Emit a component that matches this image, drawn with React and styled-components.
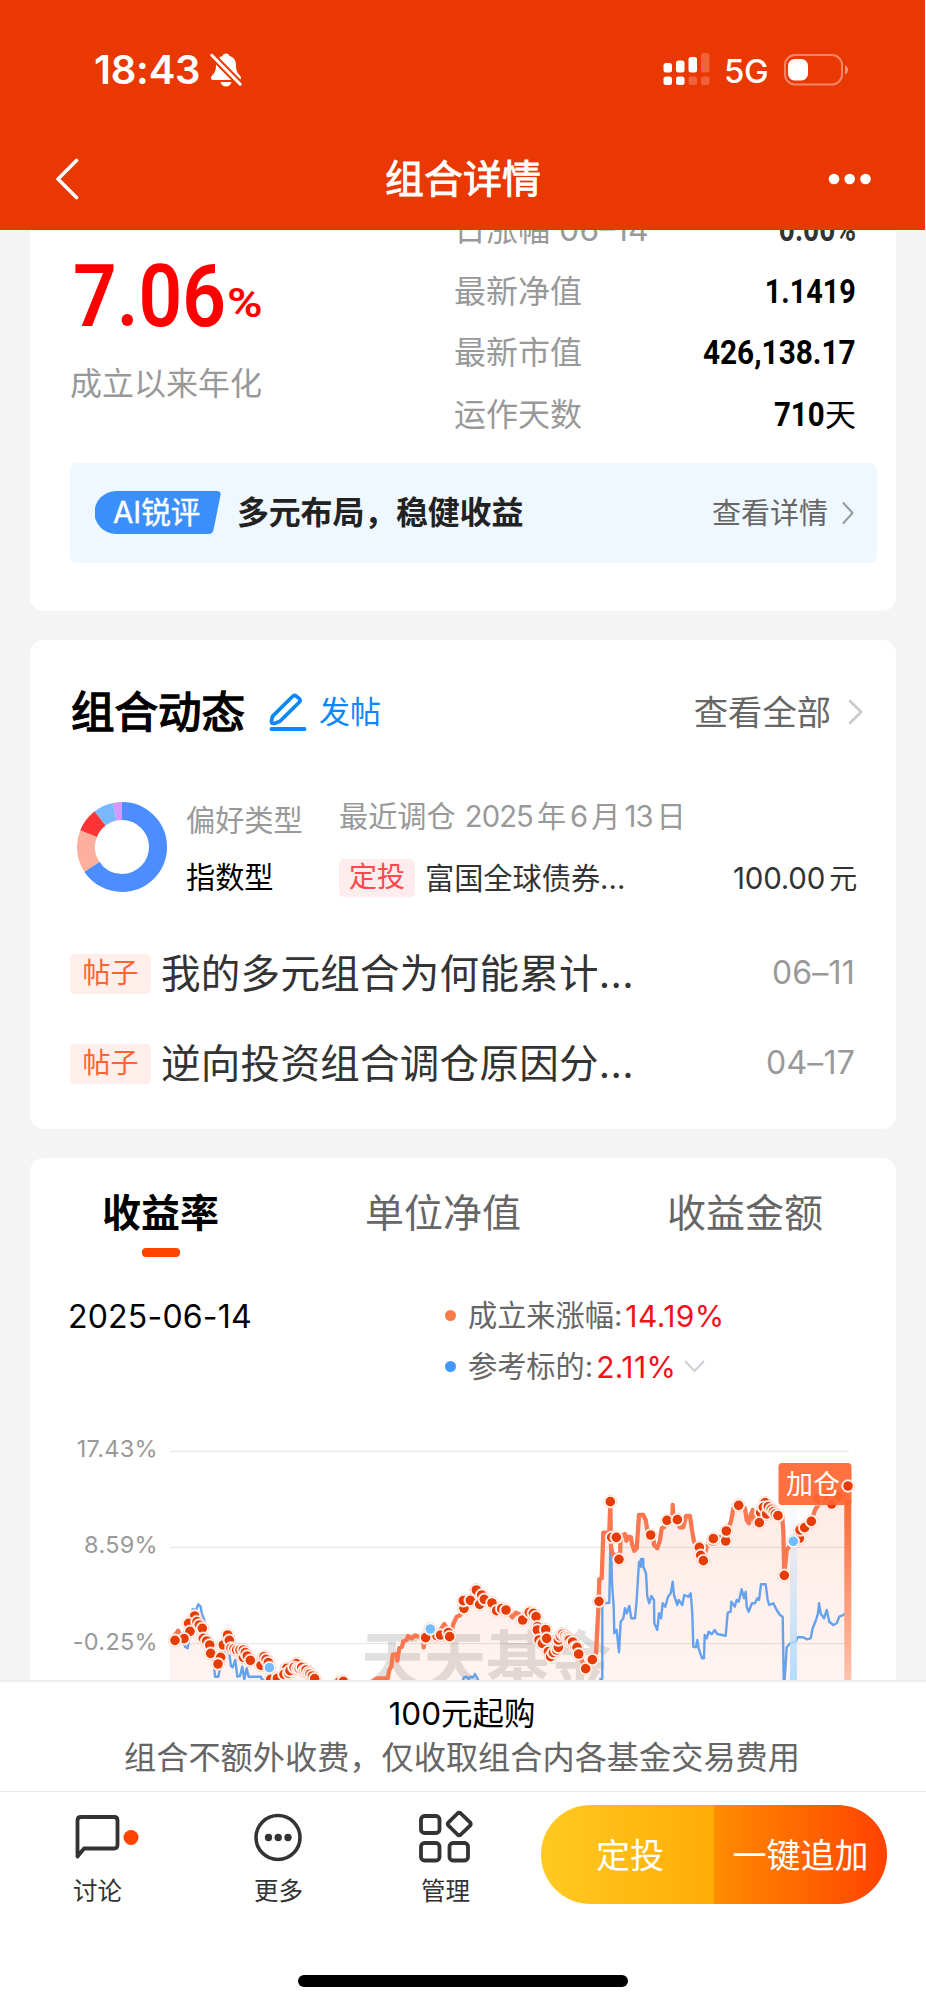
import React from "react";
import styled, { createGlobalStyle } from "styled-components";

const GlobalStyle = createGlobalStyle`
  * {
    box-sizing: border-box;
  }

  body {
    margin: 0;
    background: #f4f4f4;
    font-family: Inter, "Noto Sans CJK SC", sans-serif;
    color: #000;
  }

  svg {
    display: block;
    flex-shrink: 0;
  }
`;

/* ========== Page ========== */
const Page = styled.div`
  width: 926px;
  height: 2006px;
  display: flex;
  flex-direction: column;
  overflow: hidden;
  white-space: nowrap;
`;

const Header = styled.header`
  width: 925px;
  height: 230px;
  flex-shrink: 0;
  background: #ea3802;
  color: #fff;
`;

const StatusBar = styled.div`
  height: 139px;
  padding: 0 76px 0 94px;
  display: flex;
  align-items: center;
  justify-content: space-between;
`;

const StatusGroup = styled.div`
  display: flex;
  align-items: center;
`;

const Clock = styled.span`
  font-size: 40px;
  font-weight: 600;
  line-height: 44px;
  width: 116px;
  letter-spacing: -0.2px;
`;

const Network = styled.span`
  font-size: 33px;
  font-weight: 500;
  line-height: 40px;
  width: 60px;
  margin: 2px 0 0 14px;
  letter-spacing: -0.5px;
`;

const NavBar = styled.div`
  height: 79px;
  padding: 0 54px 0 55px;
  display: flex;
  align-items: center;
  justify-content: space-between;
`;

const NavTitle = styled.h1`
  margin: 0;
  padding-left: 17px;
  font-size: 39px;
  font-weight: 400;
  line-height: 48px;
  -webkit-text-stroke: 0.9px #fff;
`;

const Content = styled.main`
  height: 1450px;
  flex-shrink: 0;
  overflow: hidden;
  padding: 0 30px;
`;

const Card = styled.section`
  width: 866px;
  height: ${(p) => p.$height}px;
  margin-bottom: 29px;
  border-radius: 14px;
  background: #fff;
  overflow: hidden;
`;

/* ========== Summary ========== */
const SummaryCard = styled(Card)`
  margin-top: -31px;
`;

const Summary = styled.div`
  display: flex;
  justify-content: space-between;
  height: 263.5px;
  padding: 0 40px 0 40px;
`;

const Annual = styled.div`
  padding-top: 57px;
`;

const Rate = styled.div`
  display: flex;
  height: 97px;
  color: #ff0000;
  font-family: Roboto, sans-serif;
  font-weight: 700;
  font-size: 88px;
  line-height: 80px;
`;

const Squeeze = styled.span`
  display: inline-block;
  transform: scaleX(${(p) => p.$x});
  transform-origin: ${(p) => p.$from || "right"} center;
`;

const RateNumber = styled(Squeeze)`
  width: 154px;
  margin-left: 3px;
  font-weight: 600;
`;

const Percent = styled.span`
  display: inline-block;
  font-size: 41px;
  font-weight: 600;
  line-height: 94px;
  transform: scaleX(1.18);
  transform-origin: left center;
`;

const Muted = styled.div`
  font-size: 32px;
  line-height: 62px;
  color: #999;
`;

const StatList = styled.div`
  width: 402px;
`;

const StatRow = styled.div`
  display: flex;
  justify-content: space-between;
  height: 61.5px;
  font-size: 32px;
  line-height: 61.5px;
  color: #999;
`;

const StatValue = styled.span`
  display: flex;
  justify-content: flex-end;
  font-family: Roboto, "Noto Sans CJK SC", sans-serif;
  font-weight: 700;
  font-size: 33.5px;
  color: ${(p) => (p.$soft ? "#333" : "#000")};
`;

const Unit = styled.span`
  font-family: Inter, "Noto Sans CJK SC", sans-serif;
  font-weight: 400;
  font-size: 31px;
`;

const ReviewBar = styled.div`
  display: flex;
  align-items: center;
  width: 807px;
  height: 100px;
  margin-left: 40px;
  padding: 0 23px 0 25px;
  border-radius: 7px;
  background: #f0f8ff;
`;

const ReviewBadge = styled.span`
  display: grid;
  width: 126px;
  height: 43px;
  margin-right: 16px;
  color: #fff;
  font-size: 29.5px;
  line-height: 43px;
  -webkit-text-stroke: 0.4px #fff;
  text-indent: 18px;

  & > * {
    grid-area: 1 / 1;
  }
`;

const ReviewText = styled.span`
  flex: 1;
  font-size: 32px;
  line-height: 40px;
  font-weight: 700;
  letter-spacing: -0.2px;
  padding-top: 1px;
  color: #222;
`;

const MoreText = styled.span`
  font-size: ${(p) => p.$size}px;
  line-height: 44px;
  padding-top: 2px;
  margin-right: ${(p) => p.$gap}px;
  color: #666;
`;

/* ========== Activity ========== */
const ActivityHead = styled.div`
  display: flex;
  align-items: center;
  height: 144px;
  padding: 0 33px 0 41px;
`;

const ActivityTitle = styled.h2`
  margin: 0 20px 0 0;
  width: 178px;
  font-size: 43.5px;
  font-weight: 400;
  line-height: 60px;
  padding-bottom: 1px;
  -webkit-text-stroke: 1.5px #000;
`;

const PostLink = styled.span`
  flex: 1;
  margin-left: 12px;
  font-size: 31px;
  line-height: 40px;
  color: #0a88fb;
`;

const Preference = styled.div`
  display: flex;
  height: 146px;
  padding: 5px 40px 0 47px;
`;

const PreferenceType = styled.div`
  width: 153px;
  margin-left: 19px;
  padding-top: 4px;
  font-size: 29.2px;
  line-height: 56.5px;
`;

const Gray = styled.div`
  color: #999;
`;

const LastChange = styled.div`
  flex: 1;
  font-size: 29.2px;
`;

const ChangeDate = styled.div`
  line-height: 56px;
  color: #999;

  & > span {
    margin: 0 4px 0 4px;
    letter-spacing: -0.9px;
  }

  & > span:first-child {
    margin-left: 9px;
  }
`;

const ChangeRow = styled.div`
  display: flex;
  align-items: center;
  height: 38px;
  margin-top: 14px;
  line-height: 38px;
  color: #333;
`;

const Tag = styled.span`
  flex-shrink: 0;
  width: ${(p) => p.$width}px;
  height: ${(p) => p.$height}px;
  margin-right: 10px;
  border-radius: 5px;
  background: ${(p) => p.$bg};
  color: ${(p) => p.$color};
  font-size: 28px;
  line-height: ${(p) => p.$height - 1}px;
  text-align: center;
`;

const FundName = styled.span`
  flex: 1;
  padding-top: 1px;
`;

const Amount = styled.span`
  font-size: 29.5px;
  letter-spacing: -0.2px;
  margin-right: -1px;

  & > span {
    margin-left: 4px;
    font-size: 28px;
  }
`;

const PostRow = styled.div`
  display: flex;
  align-items: center;
  height: 90px;
  padding: 0 41px 2px 40px;
`;

const PostTitle = styled.span`
  flex: 1;
  font-size: 39.5px;
  line-height: 50px;
  letter-spacing: 0.3px;
  padding-bottom: 1px;
  color: #333;
`;

const PostDate = styled.span`
  font-size: 32px;
  line-height: 40px;
  padding-bottom: 2px;
  letter-spacing: 0.2px;
  color: #999;
`;

/* ========== Performance ========== */
const Tabs = styled.div`
  display: flex;
  justify-content: space-between;
  height: 118px;
  padding: 24px 73px 0 72px;
`;

const Tab = styled.div`
  height: 75px;
  display: flex;
  flex-direction: column;
  align-items: center;
  justify-content: space-between;
  font-size: 39px;
  line-height: 62px;
  font-weight: ${(p) => (p.$active ? 700 : 400)};
  color: ${(p) => (p.$active ? "#000" : "#666")};

  &::after {
    content: "";
    width: 38px;
    height: 9px;
    border-radius: 4px;
    background: ${(p) => (p.$active ? "#ff4400" : "transparent")};
  }
`;

const Legend = styled.div`
  display: flex;
  height: 124px;
  padding: 14px 41px 0 38px;
`;

const LegendDate = styled.div`
  width: 377px;
  font-size: 32px;
  line-height: 54px;
  letter-spacing: 0.2px;
`;

const LegendRow = styled.div`
  display: flex;
  align-items: center;
  height: 51px;
  font-size: 29.2px;
  line-height: 48px;
  color: #666;

  &::before {
    content: "";
    width: 11px;
    height: 11px;
    margin-right: 12px;
    border-radius: 50%;
    background: ${(p) => p.$dot};
  }
`;

const LegendValue = styled.span`
  margin: 0 8px 0 3px;
  font-size: 30px;
  letter-spacing: 0.4px;
  color: #f5101a;
`;

/* ========== Bottom ========== */
const Notice = styled.div`
  height: 112px;
  flex-shrink: 0;
  padding: 10px 2px 0 0;
  background: #fff;
  border-top: 2px solid #ededed;
  border-bottom: 1px solid #e8e8e8;
  text-align: center;
  font-size: 32.2px;
  line-height: 46px;
  color: #666;

  & > div:first-child {
    color: #000;
    font-size: 31.5px;
    line-height: 43px;
  }
`;

const BottomBar = styled.footer`
  flex: 1;
  display: flex;
  flex-direction: column;
  align-items: center;
  justify-content: space-between;
  padding: 13px 39px 19px 61px;
  background: #fff;
`;

const Actions = styled.div`
  width: 100%;
  display: flex;
`;

const Action = styled.div`
  width: ${(p) => p.$width}px;
  padding-left: ${(p) => p.$indent || 0}px;
  font-size: 24.5px;
  line-height: 36px;
  color: #333;

  & > svg {
    margin-bottom: 8px;
  }
`;

const ActionLabel = styled.div`
  margin-left: ${(p) => p.$shift || 0}px;
`;

const BuyButtons = styled.div`
  display: flex;
  width: 346px;
  height: 99px;
  border-radius: 50px;
  overflow: hidden;
`;

const BuyButton = styled.button`
  width: 173px;
  padding: 0 0 3px ${(p) => p.$indent || 0}px;
  border: 0;
  color: #fff;
  font: 34px Inter, "Noto Sans CJK SC", sans-serif;
  background: linear-gradient(to right, ${(p) => p.$from}, ${(p) => p.$to});
`;

const HomeIndicator = styled.div`
  width: 330px;
  height: 12px;
  margin-right: 22px;
  border-radius: 6px;
  background: #000;
`;

/* ========== Icons ========== */
const BellOff = () => (
  <svg width="32" height="34" viewBox="0 0 32 34">
    <path
      d="M16 0.5c-1.9 0-3.1 1-3.5 2.600C8.200 4.400 6 7.800 6 12c0 5.500-1.200 7.600-3.900 10.600C0.300 24.800 0.600 27 3 27h26c2.400 0 2.700-2.200.9-4.400C27.200 19.600 26 17.500 26 12c0-4.200-2.200-7.600-6.500-8.900C19.100 1.500 17.900.5 16 .5Z"
      fill="#fff"
    />
    <path d="M10.500 29h11c-.6 2.700-2.600 4.500-5.500 4.500s-4.900-1.800-5.500-4.500Z" fill="#fff" />
    <path d="M1 1.500 31 32" stroke="#ea3802" strokeWidth="7" />
    <path d="M1.800 2.300 30.200 31.200" stroke="#fff" strokeWidth="3" strokeLinecap="round" />
  </svg>
);

const Signal = () => (
  <svg width="47" height="33" viewBox="0 0 47 33" fill="#fff">
    <rect x="0.500" y="10" width="8.500" height="9.500" rx="2.500" />
    <rect x="13" y="7.500" width="8.500" height="12" rx="2.500" />
    <rect x="25.500" y="4" width="8.500" height="15.500" rx="2.500" />
    <rect x="38" y="0" width="8.500" height="19.500" rx="2.500" opacity="0.22" />
    <rect x="0.500" y="23.500" width="8.500" height="8.500" rx="2.500" />
    <rect x="13" y="23.500" width="8.500" height="8.500" rx="2.500" />
    <rect x="25.500" y="23.500" width="8.500" height="8.500" rx="2.500" opacity="0.22" />
    <rect x="38" y="23.500" width="8.500" height="8.500" rx="2.500" opacity="0.22" />
  </svg>
);

const Battery = () => (
  <svg width="65" height="32" viewBox="0 0 65 32">
    <rect x="1" y="1" width="57" height="29.500" rx="10" fill="none" stroke="#fff" strokeOpacity="0.4" strokeWidth="2" />
    <rect x="4" y="5" width="20" height="21.500" rx="6.500" fill="#fff" />
    <path d="M61 11c4 2 4 7.500 0 9.500Z" fill="#fff" fillOpacity="0.45" />
  </svg>
);

const Chevron = ({ w, h, color, stroke = 2.5, d }) => (
  <svg width={w} height={h} fill="none" stroke={color} strokeWidth={stroke} strokeLinecap="round" strokeLinejoin="round">
    <path d={d} />
  </svg>
);

const Pencil = () => (
  <svg width="38" height="38" viewBox="0 0 38 38" fill="none" stroke="#0a88fb" strokeLinecap="round" strokeLinejoin="round">
    <path d="M23.500 3.500Q25.500 1.600 27.500 3.300L30 5.400Q32 7.300 30.200 9.300L11.500 27.800Q10.800 28.500 9.800 28.800L5 30.400Q2.300 31 2.500 28.200L3.200 24.300Q3.400 23.400 4.200 22.600Z" strokeWidth="3.700" />
    <path d="M2.500 36h33" strokeWidth="3.800" />
  </svg>
);

const SLICES = [
  { from: 0, to: 236.8, color: "#4c8dff" },
  { from: 236.8, to: 292, color: "#ffb09c" },
  { from: 292, to: 322.7, color: "#ff3436" },
  { from: 322.7, to: 348.4, color: "#78b8fd" },
  { from: 348.4, to: 360, color: "#d496ff" },
];

const DonutBox = styled.div`
  padding-top: 13px;
`;

const Donut = () => (
  <DonutBox>
    <svg width="90" height="90" viewBox="0 0 90 90">
      {SLICES.map((s) => (
        <circle
          key={s.color}
          cx="45"
          cy="45"
          r="36"
          fill="none"
          stroke={s.color}
          strokeWidth="18"
          pathLength="360"
          strokeDasharray={`${s.to - s.from} 360`}
          transform={`rotate(${s.from - 90} 45 45)`}
        />
      ))}
    </svg>
  </DonutBox>
);

/* ========== Chart ========== */
// Each stretch of the series is stored in thirds of a pixel from its own origin
const toPoints = (raw, ox, oy) =>
  raw
    .trim()
    .split(/\s+/)
    .map((pair) => pair.split(",").map(Number))
    .map(([x, y]) => [ox + x / 3, oy + y / 3]);

const early = (raw) => toPoints(raw, 60, 1420);
const middle = (raw) => toPoints(raw, 340, 1560);
const late = (raw) => toPoints(raw, 440, 1440);
const join = (points) => points.map((p) => p.map((n) => n.toFixed(1)).join(",")).join(" ");

const fundLine = [
  ...early(
    "330,662 345,645 355,632 362,655 372,655 380,635 390,620 404,588 415,605 427,625 435,655 449,675 460,715 474,730 482,705 490,675 503,642 515,680 530,685 550,694 571,721 598,728 612,706 628,740 632,775 655,778 672,760 680,742 709,725 740,745 764,772 790,790 830,790 850,778 870,792 930,790 952,775 983,775 988,750 994,740 998,704 1010,702 1012,722 1018,684 1026,680 1030,664 1040,660 1044,648 1055,655 1065,646 1080,652 1090,650 1091,682 1096,652 1130,645 1140,632 1153,612 1160,625 1172,645 1180,612 1190,590 1200,586"
  ),
  ...middle(
    "372,150 374,122 391,121 409,90 425,108 440,125 456,130 470,150 498,150 508,160 517,172 527,158 537,162 548,180 565,155 588,168 592,210 617,210 620,236 605,250 632,290 655,262 655,240 668,216 688,236 705,260 716,282 737,326 757,300"
  ),
  ...late(
    "468,640 476,485 478,418 485,415 490,278 508,278 511,185 513,320 518,345 537,345 541,335 541,290 555,282 559,302 566,290 573,292 576,312 583,332 590,325 594,270 597,225 610,225 617,240 622,270 632,285 640,290 642,315 652,325 660,300 665,265 672,262 680,240 697,240 698,195 701,240 712,240 719,262 730,262 738,228 750,228 756,270 762,305 778,320 782,345 790,362 800,320 818,297 835,290 857,300 860,273 873,245 880,205 896,196 915,205 920,240 927,250 932,225 938,210 944,245 958,248 962,218 975,185 990,200 1000,215 1014,227 1026,225 1030,270 1033,406 1040,330 1060,305 1078,290 1080,265 1095,263 1114,243 1125,210 1135,195 1145,175 1175,188 1200,175 1215,140 1226,137"
  ),
];

const benchmarkLines = [
  early(
    "345,655 352,630 362,640 375,680 383,685 390,640 398,600 398,568 408,570 415,553 422,560 425,580 432,598 440,660 458,690 465,770 475,770 482,735 495,690 508,700 513,738 518,742 526,720 532,770 540,768 547,740 553,778 560,745 566,770 603,770 605,780 615,778"
  ),
  middle("368,360 372,353 380,350 386,357 392,350 399,352 405,342 410,352 415,360"),
  late(
    "478,718 487,716 487,490 508,488 511,325 514,330 516,430 521,500 523,580 530,570 537,637 542,545 550,535 555,505 560,520 568,498 574,535 585,535 590,480 597,365 603,380 603,357 610,357 610,380 618,400 622,470 628,490 634,468 642,480 643,550 652,570 657,520 663,535 668,490 676,500 684,470 692,460 698,425 702,465 712,495 716,480 727,495 733,465 745,470 752,460 757,520 760,620 768,622 772,600 776,625 786,655 792,655 794,585 800,595 806,575 815,583 824,570 832,582 857,587 863,518 872,515 874,485 884,500 890,480 896,485 905,448 912,475 917,455 920,500 926,515 936,490 945,490 952,475 957,480 963,433 977,433 983,480 988,495 1000,490 1010,510 1020,525 1028,530 1031,718 1034,718 1040,622 1052,608 1068,605 1072,592 1090,592 1100,598 1112,595 1118,565 1128,540 1134,520 1137,490 1142,520 1152,535 1160,510 1168,545 1180,555 1190,550 1198,530 1210,525 1218,518 1225,532"
  ),
];

const dots = [
  ...early(
    "404,588 386,610 411,605 418,615 427,625 390,634 372,656 345,661 430,655 440,663 449,675 452,700 482,712 474,732 503,645 490,675 508,661 513,684 522,686 530,690 540,690 550,690 550,712 556,698 562,708 571,721 612,710 603,736 618,718 625,728 632,778 652,775 680,745 672,763 686,760 690,752 709,731 702,742 712,745 718,746 725,742 732,752 738,750 745,758 750,762 757,768 764,776 838,786 850,784 1130,647 1142,645 1165,638 1169,650 1097,653"
  ),
  ...middle(
    "372,145 370,122 391,121 409,90 425,105 419,133 433,118 456,129 470,152 485,146 498,150 548,180 568,157 580,160 588,170 592,200 592,210 617,209 597,240 607,250 620,235 625,275 632,290 640,278 650,270 655,262 655,240 661,228 668,222 674,228 680,232 684,236 688,240 694,250 698,246 705,262 711,262 716,282 737,326 757,299 777,124"
  ),
  ...late(
    "511,185 515,292 529,292 537,358 632,285 681,241 712,239 778,322 782,346 790,362 818,303 820,296 857,303 859,273 896,196 962,218 958,248 975,188 970,202 980,222 985,200 994,208 1000,215 1006,222 1014,227 1033,406 1078,295 1080,270 1094,263 1114,244 1135,177 1155,168 1162,182 1195,170 1175,192"
  ),
];

const blueDots = [...early("628,743 1111,627"), ...late("1060,304")];

const AXIS = [
  { label: "17.43%", y: 1451.3 },
  { label: "8.59%", y: 1547.3 },
  { label: "-0.25%", y: 1643.7 },
];

const Dot = ({ x, y, color = "#e63c05" }) => (
  <g>
    <circle cx={x} cy={y} r="6.500" fill="#fff" stroke="#ffc5b3" strokeWidth="0.700" />
    <circle cx={x} cy={y} r="4.800" fill={color} />
  </g>
);

const Chart = () => (
  <svg width="866" height="280" viewBox="30 1400 866 280">
    <defs>
      <linearGradient id="area" x1="0" y1="1460" x2="0" y2="1680" gradientUnits="userSpaceOnUse">
        <stop offset="0" stopColor="#fdeae4" />
        <stop offset="1" stopColor="#fff4f1" />
      </linearGradient>
      <linearGradient id="orangeBar" x1="0" y1="0" x2="0" y2="1">
        <stop offset="0" stopColor="#fd6934" />
        <stop offset="1" stopColor="#fec2ad" />
      </linearGradient>
      <linearGradient id="blueBar" x1="0" y1="0" x2="0" y2="1">
        <stop offset="0" stopColor="#bfe0fb" stopOpacity="0.100" />
        <stop offset="1" stopColor="#b5dcfc" />
      </linearGradient>
    </defs>
    <polygon points={`170,1690 ${join(fundLine)} 849,1690`} fill="url(#area)" />
    <text
      x="361"
      y="1683"
      fontSize="63"
      fontWeight="700"
      letterSpacing="-0.500"
      fill="#8c827d"
      fillOpacity="0.25"
      fontFamily='"Noto Sans CJK SC", sans-serif'
    >
      天天基金
    </text>
    {AXIS.map((a) => (
      <g key={a.label}>
        <path d={`M170 ${a.y}H849`} stroke="#000" strokeOpacity="0.09" strokeWidth="1.300" />
        <text x="158" y={a.y + 6} fontSize="23.500" letterSpacing="0.300" fill="#999" textAnchor="end">
          {a.label}
        </text>
      </g>
    ))}
    {benchmarkLines.map((line, i) => (
      <polyline key={i} points={join(line)} fill="none" stroke="#4a93ec" strokeOpacity="0.850" strokeWidth="2.400" strokeLinejoin="round" />
    ))}
    <polyline points={join(fundLine)} fill="none" stroke="#fa7850" strokeWidth="4.300" strokeLinejoin="round" />
    <rect x="790" y="1507" width="7" height="173" fill="url(#blueBar)" />
    <rect x="844.300" y="1500" width="7" height="180" fill="url(#orangeBar)" />
    {dots.map(([x, y], i) => (
      <Dot key={i} x={x} y={y} />
    ))}
    {blueDots.map(([x, y], i) => (
      <Dot key={i} x={x} y={y} color="#72bdfd" />
    ))}
    <rect x="778.500" y="1463" width="73" height="42" rx="3.500" fill="#ff6632" fillOpacity="0.930" />
    <text x="786" y="1493.500" fontSize="27" fill="#fff">
      加仓
    </text>
    <Dot x={848} y={1486} />
  </svg>
);

const STATS = [
  { label: "日涨幅 06–14", value: "0.00%", squeeze: 0.84, soft: true },
  { label: "最新净值", value: "1.1419", squeeze: 0.86 },
  { label: "最新市值", value: "426,138.17", squeeze: 0.89 },
  { label: "运作天数", value: "710", squeeze: 0.88, unit: "天" },
];

const POSTS = [
  { title: "我的多元组合为何能累计...", date: "06–11" },
  { title: "逆向投资组合调仓原因分...", date: "04–17" },
];

const App = () => (
  <Page>
    <GlobalStyle />
    <Header>
      <StatusBar>
        <StatusGroup>
          <Clock>18:43</Clock>
          <BellOff />
        </StatusGroup>
        <StatusGroup>
          <Signal />
          <Network>5G</Network>
          <Battery />
        </StatusGroup>
      </StatusBar>
      <NavBar>
        <Chevron w={26} h={42} color="#fff" stroke={3.6} d="M21.5 2.500 3 21 21.500 39.500" />
        <NavTitle>组合详情</NavTitle>
        <svg width="43" height="12" fill="#fff">
          <circle cx="6" cy="6" r="5.300" />
          <circle cx="21.700" cy="6" r="5.300" />
          <circle cx="37.500" cy="6" r="5.300" />
        </svg>
      </NavBar>
    </Header>

    <Content>
      <SummaryCard $height={412}>
        <Summary>
          <Annual>
            <Rate>
              <RateNumber $x={0.87} $from="left">
                7.06
              </RateNumber>
              <Percent>%</Percent>
            </Rate>
            <Muted>成立以来年化</Muted>
          </Annual>
          <StatList>
            {STATS.map((s) => (
              <StatRow key={s.label}>
                <span>{s.label}</span>
                <StatValue $soft={s.soft}>
                  <Squeeze $x={s.squeeze}>{s.value}</Squeeze>
                  {s.unit && <Unit>{s.unit}</Unit>}
                </StatValue>
              </StatRow>
            ))}
          </StatList>
        </Summary>
        <ReviewBar>
          <ReviewBadge>
            <svg width="126" height="43">
              <path d="M21 0H122Q126 0 125.500 4L118.500 39Q117.500 43 113.500 43H21A21.500 21.500 0 0 1 21 0Z" fill="#3a8ffb" />
            </svg>
            <span>AI锐评</span>
          </ReviewBadge>
          <ReviewText>多元布局，稳健收益</ReviewText>
          <MoreText $size={29} $gap={14}>
            查看详情
          </MoreText>
          <Chevron w={12} h={24} color="#999" stroke={2} d="M1.500 2 10.500 12 1.500 22" />
        </ReviewBar>
      </SummaryCard>

      <Card $height={489}>
        <ActivityHead>
          <ActivityTitle>组合动态</ActivityTitle>
          <Pencil />
          <PostLink>发帖</PostLink>
          <MoreText $size={34.3} $gap={17}>
            查看全部
          </MoreText>
          <Chevron w={15} h={26} color="#c8c8c8" d="M2 2 13 13 2 24" />
        </ActivityHead>
        <Preference>
          <Donut />
          <PreferenceType>
            <Gray>偏好类型</Gray>
            <div>指数型</div>
          </PreferenceType>
          <LastChange>
            <ChangeDate>
              最近调仓<span>2025</span>年<span>6</span>月<span>13</span>日
            </ChangeDate>
            <ChangeRow>
              <Tag $width={76} $height={38} $bg="#ffecec" $color="#fb4a4d">
                定投
              </Tag>
              <FundName>富国全球债券...</FundName>
              <Amount>
                100.00<span>元</span>
              </Amount>
            </ChangeRow>
          </LastChange>
        </Preference>
        {POSTS.map((p) => (
          <PostRow key={p.date}>
            <Tag $width={81} $height={40} $bg="#ffeee9" $color="#fb6532">
              帖子
            </Tag>
            <PostTitle>{p.title}</PostTitle>
            <PostDate>{p.date}</PostDate>
          </PostRow>
        ))}
      </Card>

      <Card $height={540}>
        <Tabs>
          <Tab $active>收益率</Tab>
          <Tab>单位净值</Tab>
          <Tab>收益金额</Tab>
        </Tabs>
        <Legend>
          <LegendDate>2025-06-14</LegendDate>
          <div>
            <LegendRow $dot="#fd7b4a">
              成立来涨幅:<LegendValue>14.19%</LegendValue>
            </LegendRow>
            <LegendRow $dot="#4598fb">
              参考标的:<LegendValue>2.11%</LegendValue>
              <Chevron w={21} h={13} color="#ccd0d6" stroke={2} d="M1.500 1.500 10.500 11 19.500 1.500" />
            </LegendRow>
          </div>
        </Legend>
        <Chart />
      </Card>
    </Content>

    <Notice>
      <div>100元起购</div>
      <div>组合不额外收费，仅收取组合内各基金交易费用</div>
    </Notice>
    <BottomBar>
      <Actions>
        <Action $width={193} $indent={12}>
          <svg width="68" height="60" viewBox="0 0 68 60" fill="none" stroke="#333" strokeWidth="3.800" strokeLinejoin="round">
            <path d="M8 12H41Q44.500 12 44.500 15.500V40Q44.500 43.500 41 43.500H11L4.500 51.500V15.500Q4.500 12 8 12Z" />
            <circle cx="58" cy="32.500" r="7.500" fill="#ff4400" stroke="none" />
          </svg>
          <ActionLabel>讨论</ActionLabel>
        </Action>
        <Action $width={164}>
          <svg width="50" height="60" viewBox="0 0 50 60">
            <circle cx="24" cy="32.500" r="22" fill="none" stroke="#333" strokeWidth="3.600" />
            <circle cx="14.500" cy="32.500" r="3.700" fill="#333" />
            <circle cx="24.200" cy="32.500" r="3.700" fill="#333" />
            <circle cx="34" cy="32.500" r="3.700" fill="#333" />
          </svg>
          <ActionLabel>更多</ActionLabel>
        </Action>
        <Action $width={123}>
          <svg width="56" height="60" viewBox="0 0 56 60" fill="none" stroke="#333" strokeWidth="3.800" strokeLinejoin="round">
            <rect x="3" y="11" width="18.500" height="17" rx="3.500" />
            <rect x="3" y="38" width="18.500" height="17.500" rx="3.500" />
            <rect x="31.500" y="38" width="18.500" height="17.500" rx="3.500" />
            <path d="M39.500 8.500Q41.200 7 42.900 8.500L52 17.300Q53.500 19 52 20.700L42.900 29.500Q41.200 31 39.500 29.500L30.500 20.700Q29 19 30.500 17.300Z" />
          </svg>
          <ActionLabel $shift={3}>管理</ActionLabel>
        </Action>
        <BuyButtons>
          <BuyButton $from="#ffca22" $to="#ffab06" $indent={5}>
            定投
          </BuyButton>
          <BuyButton $from="#ff8c00" $to="#ff4200">
            一键追加
          </BuyButton>
        </BuyButtons>
      </Actions>
      <HomeIndicator />
    </BottomBar>
  </Page>
);

export default App;
